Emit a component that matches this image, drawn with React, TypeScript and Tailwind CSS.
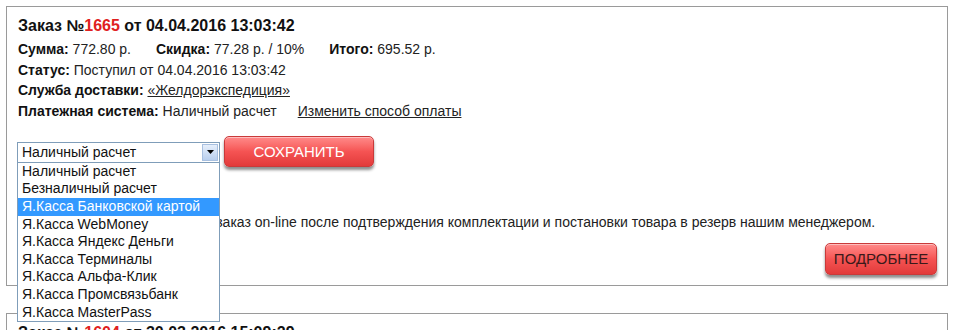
import React from "react";

const options = [
  "Наличный расчет",
  "Безналичный расчет",
  "Я.Касса Банковской картой",
  "Я.Касса WebMoney",
  "Я.Касса Яндекс Деньги",
  "Я.Касса Терминалы",
  "Я.Касса Альфа-Клик",
  "Я.Касса Промсвязьбанк",
  "Я.Касса MasterPass",
];

function RedButton({ children, dark, className }: { children: React.ReactNode; dark?: boolean; className?: string }) {
  return (
    <button
      className={
        "relative rounded-[5px] border border-[#c93a3a] bg-gradient-to-b from-[#ff8a8a] via-[#f55353] to-[#e23a3a] shadow-[0_3px_3px_rgba(0,0,0,0.45),inset_0_1px_0_rgba(255,255,255,0.45)] text-[15px] leading-none " +
        (dark ? "text-[#3a1a1a] " : "text-white ") +
        (className ?? "")
      }
    >
      {children}
    </button>
  );
}

export default function App() {
  return (
    <div className="w-[957px] h-[330px] overflow-hidden bg-white pl-[6px] pr-[9px] pt-[6px] font-['Liberation_Sans',Arial,sans-serif] text-[14px] text-[#222]">
      {/* Card 1 */}
      <div className="relative border border-[#9a9a9a] pl-[10px] pr-[9px] pt-[8px] pb-[10px]">
        <div className="text-[16px] leading-[22px] font-bold text-[#111] mb-[2px] pl-[1px]">
          Заказ №<span className="text-[#e02020]">1665</span> от 04.04.2016 13:03:42
        </div>
        <div className="pl-[1px] leading-[20.7px]">
          <div className="flex gap-[25px]">
            <span>
              <b className="text-[#111]">Сумма:</b> 772.80 р.
            </span>
            <span>
              <b className="text-[#111]">Скидка:</b> 77.28 р. / 10%
            </span>
            <span>
              <b className="text-[#111]">Итого:</b> 695.52 р.
            </span>
          </div>
          <div>
            <b className="text-[#111]">Статус:</b> Поступил от 04.04.2016 13:03:42
          </div>
          <div>
            <b className="text-[#111]">Служба доставки:</b> <span className="underline">«Желдорэкспедиция»</span>
          </div>
          <div className="flex gap-[21px]">
            <span>
              <b className="text-[#111]">Платежная система:</b> Наличный расчет
            </span>
            <span className="underline">Изменить способ оплаты</span>
          </div>
        </div>

        <div className="flex items-center gap-[4px] mt-[14px] h-[33px]">
          <div className="relative">
            <div className="w-[203px] h-[21px] border border-[#7f9db9] bg-white flex items-center justify-between pl-[4px] pr-[1px] text-[14px] text-[#111]">
              <span>Наличный расчет</span>
              <span className="w-[16px] h-[17px] border border-[#a8c0e0] bg-gradient-to-b from-[#e6effb] to-[#b9cfee] flex items-center justify-center">
                <svg width="7" height="4" viewBox="0 0 7 4">
                  <path d="M0 0H7L3.5 4Z" fill="#000" />
                </svg>
              </span>
            </div>
            <div className="absolute left-0 top-[20px] z-10 w-[203px] border border-[#7f9db9] bg-white text-[14px] text-[#111]">
              {options.map((o, i) => (
                <div
                  key={o}
                  className={
                    "h-[17.6px] leading-[17.6px] pl-[4px] whitespace-nowrap " +
                    (i === 2 ? "bg-[#3399ff] text-white" : "")
                  }
                >
                  {o}
                </div>
              ))}
            </div>
          </div>
          <RedButton className="w-[150px] h-[31px] -mt-[2px]">СОХРАНИТЬ</RedButton>
        </div>

        <div className="mt-[43px] leading-[21px] pl-[1px] whitespace-nowrap">
          Вы сможете оплатить данный заказ on-line после подтверждения комплектации и постановки товара в резерв нашим менеджером.
        </div>

        <div className="flex justify-end mt-[10px]">
          <RedButton dark className="w-[112px] h-[32px] mr-[1px]">ПОДРОБНЕЕ</RedButton>
        </div>
      </div>

      {/* Card 2 */}
      <div className="mt-[27px] border border-[#9a9a9a] pl-[10px] pr-[9px] pt-[8px] h-[60px]">
        <div className="text-[16px] leading-[22px] font-bold text-[#111] pl-[1px]">
          Заказ №<span className="text-[#e02020]">1604</span> от 30.03.2016 15:09:29
        </div>
      </div>
    </div>
  );
}
